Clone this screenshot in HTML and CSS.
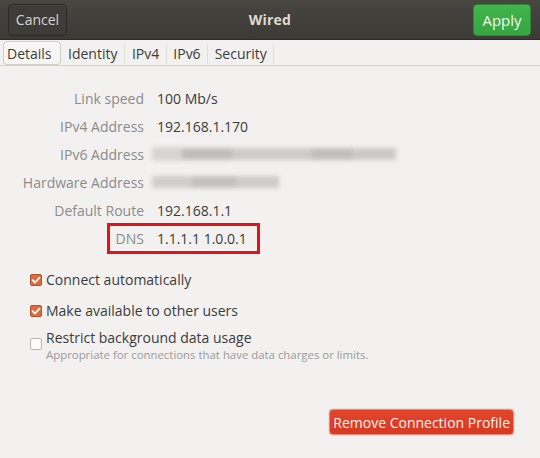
FILE: index.html
```html
<!DOCTYPE html>
<html>
<head>
<meta charset="utf-8">
<link rel="stylesheet" href="styles.css">
</head>
<body>
<div class="window">
  <header class="headerbar">
    <button class="btn-cancel">Cancel</button>
    <div class="title">Wired</div>
    <button class="btn-apply">Apply</button>
  </header>
  <nav class="tabs">
    <span class="tab active">Details</span>
    <span class="tab first">Identity</span>
    <span class="sep"></span>
    <span class="tab">IPv4</span>
    <span class="sep"></span>
    <span class="tab">IPv6</span>
    <span class="sep"></span>
    <span class="tab">Security</span>
    <span class="sep"></span>
  </nav>
  <main class="content">
    <div class="details">
      <div class="row"><span class="label">Link speed</span><span class="value">100 Mb/s</span></div>
      <div class="row"><span class="label">IPv4 Address</span><span class="value">192.168.1.170</span></div>
      <div class="row"><span class="label">IPv6 Address</span><span class="blur blur-v6"><i class="b1"></i><i class="b2"></i><i class="b3"></i><i class="b4"></i><i class="b5"></i></span></div>
      <div class="row"><span class="label">Hardware Address</span><span class="blur blur-hw"><i class="c1"></i><i class="c2"></i><i class="c3"></i></span></div>
      <div class="row"><span class="label">Default Route</span><span class="value">192.168.1.1</span></div>
      <div class="row dns"><span class="label">DNS</span><span class="value">1.1.1.1 1.0.0.1</span><span class="highlight"></span></div>
    </div>
    <div class="checks">
      <label class="check"><span class="box on"><svg viewBox="0 0 12 12" width="12" height="12"><path d="M2.6 6.2 L5 8.5 L9.6 3.6" fill="none" stroke="#fff" stroke-width="1.8" stroke-linecap="round" stroke-linejoin="round"/></svg></span><span class="ctext">Connect automatically</span></label>
      <label class="check"><span class="box on"><svg viewBox="0 0 12 12" width="12" height="12"><path d="M2.6 6.2 L5 8.5 L9.6 3.6" fill="none" stroke="#fff" stroke-width="1.8" stroke-linecap="round" stroke-linejoin="round"/></svg></span><span class="ctext">Make available to other users</span></label>
      <label class="check multi"><span class="box"></span><span class="ctexts"><span class="ctext">Restrict background data usage</span><span class="sub">Appropriate for connections that have data charges or limits.</span></span></label>
    </div>
    <div class="actions">
      <button class="btn-remove">Remove Connection Profile</button>
    </div>
  </main>
</div>
</body>
</html>
```

FILE: styles.css
```css
* { box-sizing: border-box; }
html, body { margin: 0; padding: 0; }
body {
  width: 540px;
  height: 458px;
  background: #f2f1f0;
  font-family: "Open Sans", "Noto Sans", sans-serif;
  color: #3c3c3c;
  overflow: hidden;
}
.window { width: 540px; height: 458px; display: flex; flex-direction: column; }

.headerbar {
  height: 40px;
  background: linear-gradient(#47463f, #3b3a36);
  display: flex;
  align-items: center;
  justify-content: space-between;
  padding: 0 9px 0 8px;
  border-bottom: 1px solid #2c2b28;
}
.headerbar button {
  font-family: inherit;
  font-size: 14px;
  height: 32px;
  border-radius: 4px;
  padding: 0;
}
.btn-cancel {
  width: 59px;
  background: #3d3c38;
  border: 1px solid #2b2a27;
  color: #d8d5cf;
  box-shadow: inset 0 1px 0 rgba(255,255,255,0.05);
}
.title {
  color: #dfdbd2;
  font-weight: bold;
  font-size: 14px;
  letter-spacing: 0.2px;
}
.btn-apply {
  width: 58px;
  background: linear-gradient(#43b54d, #36a53f);
  border: 1px solid #2f8a36;
  color: #f3f8f1;
  font-size: 15px !important;
}

.tabs {
  height: 26px;
  display: flex;
  align-items: stretch;
  padding: 1px 0 0 3px;
  border-bottom: 1px solid #d6d3ce;
  font-size: 14px;
}
.tab {
  display: flex;
  align-items: center;
  padding: 0 6.5px;
  color: #3c3c3c;
}
.tab.first { padding: 0 7px; }
.tab.active {
  border: 1px solid #cfcbc5;
  border-radius: 4px;
  background: #f7f6f5;
  padding: 0 4px 0 3px;
  height: 24px;
  width: 58px;
}
.sep {
  width: 1px;
  background: #e2dfdb;
  margin: 3px 0 1px 0;
}

.content { flex: 1; display: flex; flex-direction: column; }

.details { padding-top: 18px; display: flex; flex-direction: column; }
.row {
  height: 28px;
  display: flex;
  align-items: center;
  gap: 13px;
  font-size: 14px;
  position: relative;
}
.label {
  width: 144px;
  text-align: right;
  color: #8b8b8b;
}
.value { color: #3c3c3c; }

.blur {
  display: flex;
  height: 22px;
  align-items: center;
  filter: blur(2px);
  margin-left: -5px;
}
.blur i { display: block; height: 12px; background: #c9c8c6; }
.blur-v6 .b1 { width: 30px; background: #d6d5d3; height: 14px; }
.blur-v6 .b2 { width: 50px; background: #bfbebc; }
.blur-v6 .b3 { width: 80px; background: #cdccca; }
.blur-v6 .b4 { width: 40px; background: #c0bfbd; }
.blur-v6 .b5 { width: 44px; background: #cbcac8; }
.blur-hw .c1 { width: 40px; background: #cfcecc; }
.blur-hw .c2 { width: 44px; background: #c2c1bf; }
.blur-hw .c3 { width: 43px; background: #cdccca; }

.highlight {
  position: absolute;
  left: 107px;
  top: -1px;
  width: 153px;
  height: 31px;
  border: 3px solid #e3131b;
}

.checks {
  padding: 12px 0 0 30px;
  display: flex;
  flex-direction: column;
}
.check {
  display: flex;
  align-items: center;
  gap: 4px;
  height: 31px;
  font-size: 14px;
  color: #3c3c3c;
}
.box {
  width: 12px;
  height: 12px;
  border-radius: 2px;
  border: 1px solid #bcb9b4;
  background: #fbfbfb;
  display: flex;
  flex-shrink: 0;
}
.box.on {
  background: #dd6b3c;
  border-color: #b35230;
}
.box.on svg { margin: -1px; }
.check.multi { align-items: flex-start; padding-top: 2px; height: 40px; }
.check.multi .box { margin-top: 10px; }
.ctexts { display: flex; flex-direction: column; }
.ctexts .ctext { line-height: 20px; }
.sub { font-size: 11.4px; color: #9a9a9a; line-height: 13px; }

.actions {
  display: flex;
  justify-content: flex-end;
  padding: 43px 26px 0 0;
}
.btn-remove {
  font-family: inherit;
  font-size: 14px;
  height: 26px;
  padding: 0 3px;
  border-radius: 4px;
  background: linear-gradient(#e4442c, #d63a22);
  border: 1px solid #e88a78;
  color: #fff3ef;
  box-shadow: 0 0 1px #b8321e;
}
```
